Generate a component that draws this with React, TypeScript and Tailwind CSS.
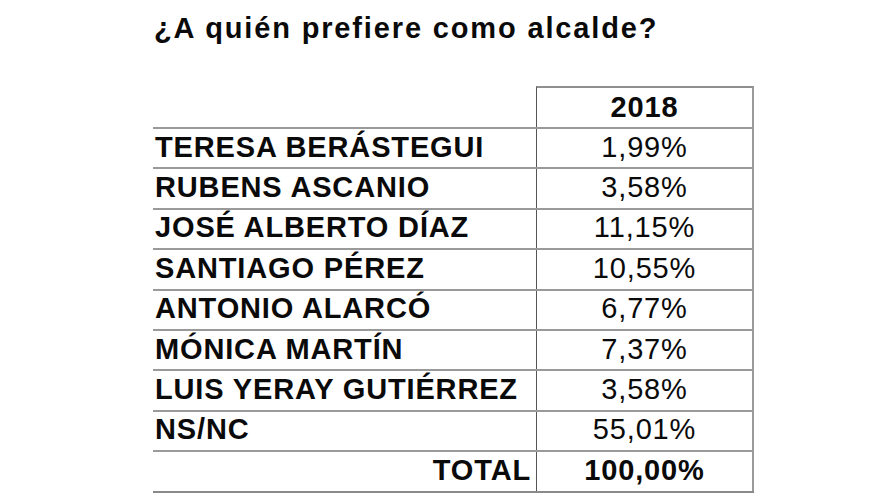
import React from "react";

const rows: [string, string][] = [
  ["TERESA BERÁSTEGUI", "1,99%"],
  ["RUBENS ASCANIO", "3,58%"],
  ["JOSÉ ALBERTO DÍAZ", "11,15%"],
  ["SANTIAGO PÉREZ", "10,55%"],
  ["ANTONIO ALARCÓ", "6,77%"],
  ["MÓNICA MARTÍN", "7,37%"],
  ["LUIS YERAY GUTIÉRREZ", "3,58%"],
  ["NS/NC", "55,01%"],
];

export default function App() {
  return (
    <div
      className="w-[880px] h-[495px] bg-white overflow-hidden text-[#0a0a0a]"
      style={{ fontFamily: '"Liberation Sans", Arial, sans-serif' }}
    >
      <div className="pt-[12px] pl-[153px]">
        <h1 className="text-[29px] leading-[32px] font-bold tracking-[1.85px] pl-[1px]">
          ¿A quién prefiere como alcalde?
        </h1>
        <div className="mt-[42px] w-[601px] text-[29px] tracking-[0.85px]">
          <div className="flex h-[43px] border-b-2 border-[#9a9a9a]">
            <div className="w-[383px]" />
            <div className="flex-1 border-t-2 border-l border-r-2 border-t-[#8f8f8f] border-l-[#555] border-r-[#9a9a9a] flex items-center justify-center font-bold leading-none">
              2018
            </div>
          </div>
          {rows.map(([name, pct]) => (
            <div key={name} className="flex h-[40.4px] border-b-2 border-[#9a9a9a]">
              <div className="w-[383px] pl-[2px] font-bold flex items-center leading-none pb-[2px]">
                {name}
              </div>
              <div className="flex-1 border-l border-r-2 border-l-[#555] border-r-[#9a9a9a] flex items-center justify-center leading-none pb-[2px]">
                {pct}
              </div>
            </div>
          ))}
          <div className="flex h-[40.4px] border-b-2 border-[#8a8a8a]">
            <div className="w-[383px] pr-[5px] font-bold flex items-center justify-end leading-none pb-[2px]">
              TOTAL
            </div>
            <div className="flex-1 border-l border-r-2 border-l-[#555] border-r-[#9a9a9a] flex items-center justify-center font-bold leading-none pb-[2px]">
              100,00%
            </div>
          </div>
        </div>
      </div>
    </div>
  );
}
